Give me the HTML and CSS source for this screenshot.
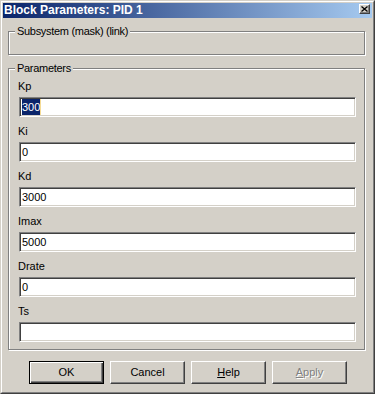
FILE: index.html
```html
<!DOCTYPE html>
<html>
<head>
<meta charset="utf-8">
<link rel="stylesheet" href="styles.css">
</head>
<body>
<div class="window">
  <div class="frame">
    <div class="titlebar">
      <span class="title">Block Parameters: PID 1</span>
      <span class="close"><svg width="7" height="6" viewBox="0 0 7 6"><path d="M0.5 0.5 L6.5 5.5 M6.5 0.5 L0.5 5.5" stroke="#000" stroke-width="1.3" fill="none"/></svg></span>
    </div>
    <div class="content">
      <div class="group group-mask">
        <span class="legend">Subsystem (mask) (link)</span>
      </div>
      <div class="group group-params">
        <span class="legend">Parameters</span>
        <div class="fields">
          <div class="field">
            <div class="label">Kp</div>
            <div class="edit"><span class="sel">300</span><span class="caret"></span></div>
          </div>
          <div class="field">
            <div class="label">Ki</div>
            <div class="edit">0</div>
          </div>
          <div class="field">
            <div class="label">Kd</div>
            <div class="edit">3000</div>
          </div>
          <div class="field">
            <div class="label">Imax</div>
            <div class="edit">5000</div>
          </div>
          <div class="field">
            <div class="label">Drate</div>
            <div class="edit">0</div>
          </div>
          <div class="field">
            <div class="label">Ts</div>
            <div class="edit"></div>
          </div>
        </div>
      </div>
      <div class="buttons">
        <div class="btn btn-default">OK</div>
        <div class="btn">Cancel</div>
        <div class="btn"><u>H</u>elp</div>
        <div class="btn btn-disabled"><u>A</u>pply</div>
      </div>
    </div>
  </div>
</div>
</body>
</html>
```

FILE: styles.css
```css
html, body {
  margin: 0;
  padding: 0;
  background: #d4d0c8;
}
body {
  font-family: "Liberation Sans", Arial, sans-serif;
  font-size: 11px;
  color: #000;
}
.window {
  width: 375px;
  height: 394px;
  box-sizing: border-box;
  border: 1px solid;
  border-color: #d4d0c8 #404040 #404040 #d4d0c8;
}
.frame {
  height: 100%;
  box-sizing: border-box;
  border: 1px solid;
  border-color: #ffffff #808080 #808080 #ffffff;
  padding: 1px;
  display: flex;
  flex-direction: column;
}
.titlebar {
  height: 15px;
  display: flex;
  align-items: flex-start;
  background: linear-gradient(to right, #0a246a, #a6caf0);
  color: #fff;
}
.title {
  flex: 1;
  font-weight: bold;
  font-size: 12px;
  line-height: 15px;
  padding-left: 1px;
  white-space: nowrap;
}
.close {
  width: 11px;
  height: 10px;
  margin-top: 1px;
  margin-right: 2px;
  box-sizing: border-box;
  background: #d4d0c8;
  border: 1px solid;
  border-color: #ffffff #404040 #404040 #ffffff;
  box-shadow: inset -1px -1px 0 #808080;
  display: flex;
  align-items: center;
  justify-content: center;
}
.close svg {
  display: block;
}
.content {
  padding: 0 7px 0 5px;
}
.group {
  border: 1px solid #808080;
  box-shadow: inset 1px 1px 0 #ffffff, 1px 1px 0 #ffffff;
  box-sizing: border-box;
}
.group-mask {
  margin-top: 13px;
  height: 24px;
}
.group-params {
  margin-top: 13px;
  height: 282px;
}
.legend {
  display: block;
  width: fit-content;
  margin-top: -7px;
  margin-left: 6px;
  padding: 0 2px;
  line-height: 13px;
  background: #d4d0c8;
  letter-spacing: -0.3px;
}
.fields {
  display: flex;
  flex-direction: column;
  gap: 7px;
  padding: 4px 8px 0 10px;
}
.field {
  display: flex;
  flex-direction: column;
  gap: 4px;
}
.label {
  line-height: 14px;
  margin-left: -1px;
}
.edit {
  height: 20px;
  box-sizing: border-box;
  background: #fff;
  border: 1px solid;
  border-color: #808080 #ffffff #ffffff #808080;
  box-shadow: inset 1px 1px 0 #404040, inset -1px -1px 0 #d4d0c8;
  padding: 1px 2px;
  line-height: 16px;
  white-space: nowrap;
}
.sel {
  display: inline-block;
  vertical-align: top;
  height: 16px;
  background: #0a246a;
  color: #fff;
}
.caret {
  display: inline-block;
  vertical-align: top;
  width: 1px;
  height: 16px;
  background: #f5db95;
}
.buttons {
  margin-top: 11px;
  margin-left: 21px;
  display: flex;
  gap: 6px;
}
.btn {
  width: 75px;
  height: 23px;
  box-sizing: border-box;
  border: 1px solid;
  border-color: #ffffff #404040 #404040 #ffffff;
  box-shadow: inset -1px -1px 0 #808080;
  text-align: center;
  line-height: 21px;
}
.btn-default {
  border-color: #000;
  box-shadow: inset 1px 1px 0 #ffffff, inset -1px -1px 0 #404040, inset -2px -2px 0 #808080;
}
.btn-disabled {
  color: #808080;
  text-shadow: 1px 1px 0 #ffffff;
}
```
